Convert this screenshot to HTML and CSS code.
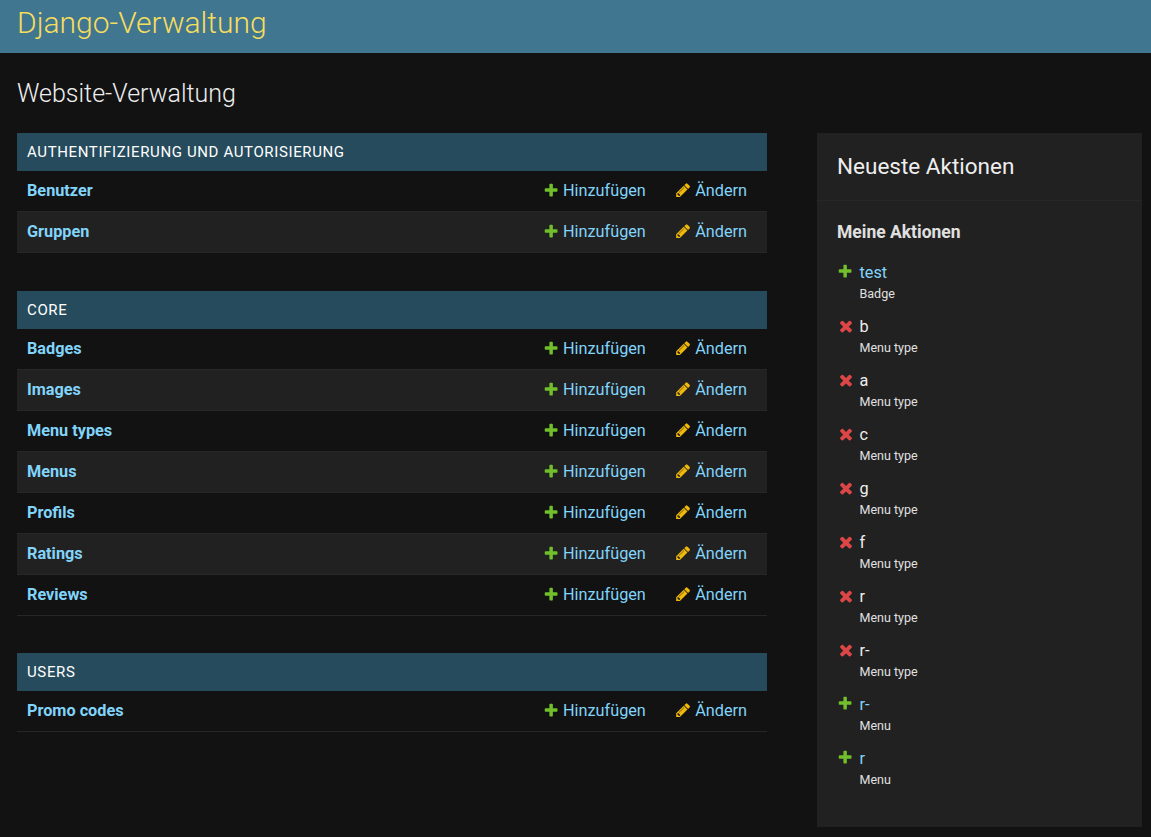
FILE: index.html
```html
<!DOCTYPE html>
<html lang="de">
<head>
<meta charset="utf-8">
<title>Website-Verwaltung | Django-Verwaltung</title>
<link rel="stylesheet" href="styles.css">
</head>
<body>
<svg class="sprite" aria-hidden="true">
  <symbol id="add" viewBox="0 0 1792 1792"><path fill="#70bf2b" d="M1600 796v192q0 40-28 68t-68 28h-416v416q0 40-28 68t-68 28h-192q-40 0-68-28t-28-68v-416h-416q-40 0-68-28t-28-68v-192q0-40 28-68t68-28h416v-416q0-40 28-68t68-28h192q40 0 68 28t28 68v416h416q40 0 68 28t28 68z"/></symbol>
  <symbol id="change" viewBox="0 0 1792 1792"><path fill="#efb80b" d="M491 1536l91-91-235-235-91 91v107h128v128h107zm523-928q0-22-22-22-10 0-17 7l-542 542q-7 7-7 17 0 22 22 22 10 0 17-7l542-542q7-7 7-17zm-54-192l416 416-832 832h-416v-416zm683 96q0 53-37 90l-166 166-416-416 166-165q36-38 90-38 53 0 91 38l235 234q37 39 37 91z"/></symbol>
  <symbol id="delete" viewBox="0 0 1792 1792"><path fill="#dd4646" d="M1490 1322q0 40-28 68l-136 136q-28 28-68 28t-68-28l-294-294-294 294q-28 28-68 28t-68-28l-136-136q-28-28-28-68t28-68l294-294-294-294q-28-28-28-68t28-68l136-136q28-28 68-28t68 28l294 294 294-294q28-28 68-28t68 28l136 136q28 28 28 68t-28 68l-294 294 294 294q28 28 28 68z"/></symbol>
</svg>
<header class="header"><h1 class="brand">Django-Verwaltung</h1></header>
<main class="main">
  <h2 class="title">Website-Verwaltung</h2>
  <div class="columns">
    <div class="apps" id="apps"></div>
    <aside class="recent">
      <h2 class="recent-title">Neueste Aktionen</h2>
      <h3 class="recent-subtitle">Meine Aktionen</h3>
      <ul class="actions" id="actions"></ul>
    </aside>
  </div>
</main>
<script src="script.js"></script>
</body>
</html>
```
FILE: script.js
```js
const icon = name => `<svg class="icon"><use href="#${name}"/></svg>`;
const apps = [
  ['Authentifizierung und Autorisierung', ['Benutzer', 'Gruppen']],
  ['Core', ['Badges', 'Images', 'Menu types', 'Menus', 'Profils', 'Ratings', 'Reviews']],
  ['Users', ['Promo codes']]
];
const actions = [
  ['add', 'test', 'Badge'],
  ['delete', 'b', 'Menu type'],
  ['delete', 'a', 'Menu type'],
  ['delete', 'c', 'Menu type'],
  ['delete', 'g', 'Menu type'],
  ['delete', 'f', 'Menu type'],
  ['delete', 'r', 'Menu type'],
  ['delete', 'r-', 'Menu type'],
  ['add', 'r-', 'Menu'],
  ['add', 'r', 'Menu']
];
document.getElementById('apps').innerHTML = apps.map(([name, models]) => `
  <section class="module">
    <h3 class="caption">${name}</h3>
    ${models.map(model => `<div class="row">
      <a class="model">${model}</a>
      <a class="link">${icon('add')}Hinzufügen</a>
      <a class="link">${icon('change')}Ändern</a>
    </div>`).join('')}
  </section>`).join('');
document.getElementById('actions').innerHTML = actions.map(([kind, label, type]) => `
  <li class="action ${kind}">${icon(kind)}<div>
    <div class="label">${label}</div><div class="type">${type}</div>
  </div></li>`).join('');
```
FILE: styles.css
```css
* { box-sizing: border-box; }
body {
  margin: 0;
  background: #121212;
  color: #eee;
  font-family: Roboto, sans-serif;
  font-size: 16.25px;
}
h1, h2, h3, ul { margin: 0; padding: 0; }
.sprite { display: none; }
.header { height: 53px; background: #417690; padding: 5px 17px; }
.brand { font-size: 30px; line-height: 35px; font-weight: 300; color: #f5dd5d; }
.main { padding: 25px 9px 0 17px; }
.title { font-size: 25px; line-height: 31px; font-weight: 300; margin-bottom: 24px; }
.columns { display: flex; justify-content: space-between; align-items: flex-start; }
.apps { width: 750px; }
.module { margin-bottom: 38px; }
.module:nth-child(2) { margin-bottom: 37px; }
.caption {
  height: 38px;
  padding: 0 10px;
  background: #264b5d;
  font-size: 15px;
  line-height: 38px;
  font-weight: 400;
  color: #fff;
  letter-spacing: 0.625px;
  text-transform: uppercase;
}
.row {
  display: flex;
  align-items: center;
  height: 41px;
  padding: 0 20px 2px 10px;
  border-bottom: 1px solid #272727;
}
.row:nth-child(odd) { background: #212121; }
.model { flex: 1; font-weight: 700; color: #81d4fa; }
.link { display: flex; align-items: center; color: #81d4fa; margin-left: 29.3px; }
.icon { width: 16.25px; height: 16.25px; flex: none; margin-right: 3.75px; }
.recent { width: 325px; height: 694px; background: #212121; }
.recent-title {
  height: 68px;
  padding: 20px 20px 0;
  border-bottom: 1px solid #272727;
  font-size: 22.5px;
  line-height: 27px;
  font-weight: 400;
}
.recent-subtitle { font-size: 17.5px; line-height: 22px; padding: 20px 20px 0; color: #e0e0e0; }
.actions { list-style: none; padding: 18px 20px 0; }
.action { display: flex; height: 54px; padding-top: 1px; }
.action .icon { margin: 1px 6.25px 0 0; }
.delete .icon { width: 18px; height: 18px; margin: 1px 4.5px 0 0; }
.label { line-height: 22px; }
.type { font-size: 12.5px; line-height: 20px; color: #e0e0e0; }
.add .label { color: #81d4fa; }
```
